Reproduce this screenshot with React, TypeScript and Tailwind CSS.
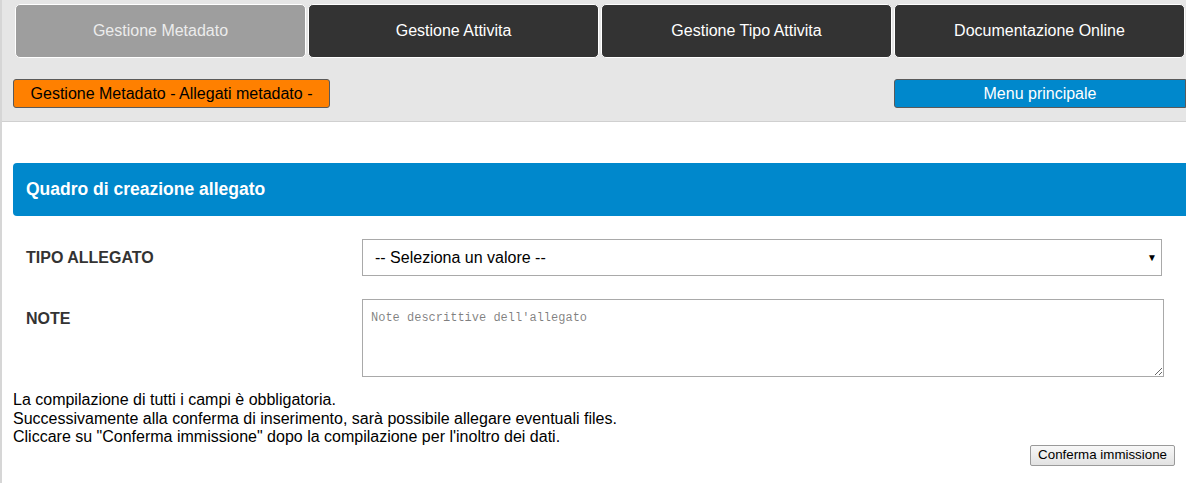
import React from "react";

const tabs = [
  { label: "Gestione Metadato", active: true },
  { label: "Gestione Attivita", active: false },
  { label: "Gestione Tipo Attivita", active: false },
  { label: "Documentazione Online", active: false },
];

export default function App() {
  return (
    <div
      className="w-[1186px] h-[483px] overflow-hidden bg-white border-l-2 border-[#d6d6d6] text-black"
      style={{ fontFamily: '"Liberation Sans", Arial, sans-serif' }}
    >
      <div className="bg-[#e6e6e6] border-b border-[#d0d0d0] h-[122px] pl-[12px]">
        <div className="grid grid-cols-4 pt-[4px]">
          {tabs.map((t) => (
            <div key={t.label} className="px-[1px]">
              <div
                className={
                  "h-[54px] flex items-center justify-center rounded-[5px] border border-white text-[16px] pb-[1px] " +
                  (t.active ? "bg-[#9e9e9e] text-[#ececec]" : "bg-[#333333] text-white")
                }
              >
                {t.label}
              </div>
            </div>
          ))}
        </div>
        <div className="flex justify-between items-start mt-[21px] -ml-[1px]">
          <div className="w-[317px] h-[29px] bg-[#ff8000] border border-[#5a5a5a] rounded-[3px] flex items-center justify-center text-[16px] text-black">
            Gestione Metadato - Allegati metadato -
          </div>
          <div className="w-[292px] h-[29px] bg-[#0088cc] border border-[#5a5a5a] rounded-l-[3px] flex items-center justify-center text-[16px] text-white">
            Menu principale
          </div>
        </div>
      </div>

      <div className="pl-[11px] pt-[41px]">
        <div className="h-[53px] bg-[#0088cc] rounded-l-[4px] flex items-center pl-[13px] text-white font-bold text-[17.5px]">
          Quadro di creazione allegato
        </div>

        <div className="flex items-center mt-[23px] h-[37px]">
          <div className="w-[349px] pl-[13px] font-bold text-[16px] text-[#333]">TIPO ALLEGATO</div>
          <div className="w-[800px] h-[37px] border border-[#a9a9a9] flex items-center justify-between pl-[12px] pr-[4px] text-[16px] text-black">
            <span>-- Seleziona un valore --</span>
            <span className="text-[10px] leading-none">▼</span>
          </div>
        </div>

        <div className="flex items-start mt-[23px]">
          <div className="w-[349px] pl-[13px] pt-[8px] font-bold text-[16px] text-[#333]">NOTE</div>
          <textarea
            className="w-[802px] h-[78px] border border-[#a9a9a9] px-[8px] pt-[9px] text-[12px] outline-none resize"
            style={{ fontFamily: '"Liberation Mono", "DejaVu Sans Mono", monospace' }}
            placeholder="Note descrittive dell'allegato"
          />
        </div>

        <div className="mt-[14px] text-[16px] leading-[18.5px] text-black">
          <div>La compilazione di tutti i campi è obbligatoria.</div>
          <div>Successivamente alla conferma di inserimento, sarà possibile allegare eventuali files.</div>
          <div>Cliccare su "Conferma immissione" dopo la compilazione per l'inoltro dei dati.</div>
        </div>

        <div className="flex justify-end pr-[11px] -mt-[2px]">
          <button className="h-[21px] px-[7px] border border-[#9a9a9a] rounded-[2px] bg-gradient-to-b from-[#f8f8f8] to-[#e2e2e2] text-[13.33px] text-black leading-none">
            Conferma immissione
          </button>
        </div>
      </div>
    </div>
  );
}
